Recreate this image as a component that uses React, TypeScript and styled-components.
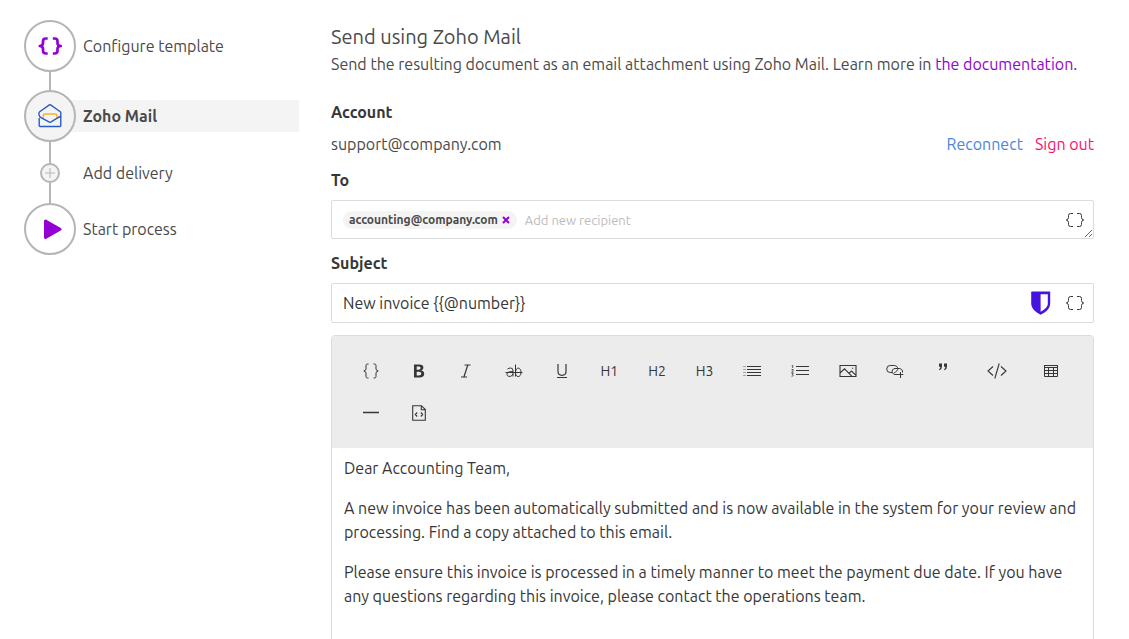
import React from "react";
import styled, { createGlobalStyle, css } from "styled-components";

const GlobalStyle = createGlobalStyle`
  *, *::before, *::after { box-sizing: border-box; }
  body {
    margin: 0;
    background: #fff;
    color: #4a4a4a;
    font-family: Ubuntu, "Noto Sans", sans-serif;
    font-size: 16px;
    line-height: 24px;
  }
  button, input { font: inherit; color: inherit; }
  button { padding: 0; border: 0; background: none; cursor: pointer; }
  h1, h2, p, ol { margin: 0; padding: 0; font-size: inherit; font-weight: inherit; }
  a { text-decoration: none; }
  svg { display: block; }
`;

const Page = styled.div`
  display: flex;
  gap: 32px;
  padding: 20px 35px 24px 24px;
`;

const Sidebar = styled.nav`
  flex: 0 0 275px;
`;

const Steps = styled.ol`
  list-style: none;
`;

const StepItem = styled.li<{ $link?: number }>`
  ${(p) =>
    p.$link &&
    css`
      &::after {
        content: "";
        display: block;
        width: 2px;
        height: ${p.$link}px;
        margin-left: 25px;
        background: #b5b5b5;
      }
    `}
`;

const StepButton = styled.button<{ $active?: boolean }>`
  display: flex;
  align-items: center;
  width: 100%;
  text-align: left;
  font-weight: ${(p) => (p.$active ? 600 : 400)};
  ${(p) =>
    p.$active &&
    css`
      background: linear-gradient(#f4f4f4, #f4f4f4) 26px center / 100% 32px no-repeat;
    `}
`;

const IconSlot = styled.span`
  display: flex;
  justify-content: center;
  flex: 0 0 52px;
  margin-right: 7px;
`;

const Circle = styled.span<{ $small?: boolean; $filled?: boolean }>`
  display: flex;
  align-items: center;
  justify-content: center;
  width: ${(p) => (p.$small ? 20 : 52)}px;
  height: ${(p) => (p.$small ? 20 : 52)}px;
  border: 2px solid #b5b5b5;
  border-radius: 50%;
  background: ${(p) => (p.$filled ? "#f4f4f4" : "#fff")};
`;

const StepLabel = styled.span`
  line-height: 20px;
`;

const Main = styled.main`
  flex: 1;
  min-width: 0;
  padding-top: 2px;
`;

const Title = styled.h1`
  && { font-size: 20px; }
  line-height: 30px;
`;

const DocLink = styled.a`
  color: #9400d3;
`;

const Label = styled.label`
  display: block;
  margin: 12px 0 8px;
  color: #363636;
  font-weight: 600;
`;

const AccountHeading = styled(Label).attrs({ as: "h2" })`
  && {
    margin: 24px 0 8px;
    font-weight: 600;
  }
`;

const AccountRow = styled.div`
  display: flex;
  gap: 12px;
`;

const AccountName = styled.span`
  flex: 1;
`;

const TextAction = styled.button<{ $color: string }>`
  color: ${(p) => p.$color};
`;

const Field = styled.div<{ $height: number }>`
  position: relative;
  display: flex;
  align-items: center;
  height: ${(p) => p.$height}px;
  padding: 0 8px 0 11px;
  border: 1px solid #dbdbdb;
  border-radius: 2px;
  color: #363636;
`;

const Tag = styled.span`
  display: flex;
  align-items: center;
  gap: 4px;
  height: 18px;
  margin-right: 8px;
  padding: 0 7px 0 6px;
  border-radius: 9px;
  background: #f4f4f4;
  color: #4a4a4a;
  font-size: 12px;
  font-weight: 600;
  line-height: 18px;
`;

const FieldInput = styled.input<{ $small?: boolean }>`
  flex: 1;
  min-width: 0;
  height: 24px;
  padding: 0;
  border: 0;
  outline: 0;
  background: none;
  font-size: ${(p) => (p.$small ? 13 : 16)}px;
  &::placeholder { color: #bcbcbc; opacity: 1; }
`;

const FieldActions = styled.div`
  display: flex;
  align-items: center;
  gap: 14px;
`;

const ResizeGrip = styled.svg`
  position: absolute;
  right: 0;
  bottom: 0;
`;

const Editor = styled.section`
  margin-top: 12px;
  border: 1px solid #dbdbdb;
  border-radius: 4px;
  overflow: hidden;
`;

const Toolbar = styled.div`
  display: grid;
  grid-template-columns: repeat(13, 1fr) 60px 48px;
  grid-auto-rows: 42px;
  padding: 14px 18px 14px 15px;
  background: #ececec;
  color: #363636;
`;

const Tool = styled.button`
  display: flex;
  align-items: center;
  justify-content: center;
  font-size: 14px;
`;

const EditorBody = styled.div`
  min-height: 240px;
  padding: 8px 12px;
  color: #363636;
  outline: 0;
  p + p { margin-top: 16px; }
`;

const Stroke = ({ w, h, sw = 1, children }: { w: number; h: number; sw?: number; children: React.ReactNode }) => (
  <svg width={w} height={h} viewBox={`0 0 ${w} ${h}`} fill="none" stroke="currentColor" strokeWidth={sw} aria-hidden="true">
    {children}
  </svg>
);

const TemplateIcon = () => (
  <svg width="24" height="20" viewBox="0 0 24 20" fill="none" stroke="#9400d3" strokeWidth="2.700" strokeLinejoin="round" aria-hidden="true">
    <path d="M9.700 2.500H7.800Q5 2.500 5 5.200V7.200Q5 9.500 1.800 10Q5 10.500 5 12.800V14.800Q5 17.500 7.800 17.500H9.700M14.800 2.500H16.700Q19.500 2.500 19.500 5.200V7.200Q19.500 9.500 22.700 10Q19.500 10.500 19.500 12.800V14.800Q19.500 17.500 16.700 17.500H14.800" />
  </svg>
);

const ZohoIcon = () => (
  <svg width="24" height="24" viewBox="0 0 24 24" fill="none" strokeWidth="1.400" strokeLinejoin="round" strokeLinecap="round" aria-hidden="true">
    <path stroke="#f9b21d" d="M5.200 14V12Q5.200 10 7 10H17.200Q19 10 19 12V14" />
    <path stroke="#2a5bc4" d="M1.200 14.500V21.500Q1.200 22.500 2.200 22.500H21.800Q22.800 22.500 22.800 21.500V8.700Q22.800 8.100 22.300 7.700L12.600 0.900Q12 0.600 11.400 0.900L1.700 7.700Q0.600 8.700 1 10.500Q1.200 12.700 3 13.700L11.400 18.200Q12 18.500 12.600 18.200L22.600 12.100" />
  </svg>
);

const PlayIcon = () => (
  <svg width="24" height="24" viewBox="0 0 24 24" fill="#9400d3" stroke="#9400d3" strokeWidth="3" strokeLinejoin="round" aria-hidden="true">
    <path d="M7.500 4L22 12.200L7.500 20.500Z" />
  </svg>
);

const BracesIcon = () => (
  <Stroke w={20} h={16}>
    <path d="M8 1.500H5.500Q3.500 1.500 3.500 3.500V5.500Q3.500 7.500 1.300 8Q3.500 8.500 3.500 10.500V12.500Q3.500 14.500 5.500 14.500H8M12 1.500H14.500Q16.500 1.500 16.500 3.500V5.500Q16.500 7.500 18.700 8Q16.500 8.500 16.500 10.500V12.500Q16.500 14.500 14.500 14.500H12" />
  </Stroke>
);

const ShieldIcon = () => (
  <svg width="20" height="24" viewBox="0 0 20 24" aria-hidden="true">
    <path fill="#4614e0" d="M1 0.500H18.500Q19.200 0.500 19.200 1.200V12.500C19.200 17.500 14.500 21.500 9.600 23.700C5 21.500 0.200 17.500 0.200 12.500V1.200Q0.200 0.500 1 0.500Z" />
    <path fill="#fff" d="M9.600 3.200H16.800V12.800C16.800 16 13 19 9.600 20.800Z" />
  </svg>
);

const tools: { name: string; icon: React.ReactNode }[] = [
  {
    name: "Insert placeholder",
    icon: (
      <Stroke w={18} h={16}>
        <path d="M6.500 1H5.500Q4 1 4 2.500V6Q4 7.500 1.800 8Q4 8.500 4 10V13.500Q4 15 5.500 15H6.500M11.500 1H12.500Q14 1 14 2.500V6Q14 7.500 16.200 8Q14 8.500 14 10V13.500Q14 15 12.500 15H11.500" />
      </Stroke>
    ),
  },
  {
    name: "Bold",
    icon: (
      <svg width="12" height="14" viewBox="0 0 12 14" fill="currentColor" fillRule="evenodd" aria-hidden="true">
        <path d="M1 0.500H6.300Q10.400 0.500 10.400 3.700Q10.400 5.900 8.200 6.600Q11.200 7.100 11.200 9.700Q11.200 13.500 6.500 13.500H1ZM3.700 2.500V5.800H5.500Q7.600 5.800 7.600 4T5.700 2.500ZM3.700 7.800V11.500H5.800Q8.300 11.500 8.300 9.600T5.800 7.800Z" />
      </svg>
    ),
  },
  {
    name: "Italic",
    icon: (
      <Stroke w={12} h={14} sw={1.2}>
        <path d="M4.500 1H10.500M1 13H7M7.800 1L3.900 13" />
      </Stroke>
    ),
  },
  {
    name: "Strikethrough",
    icon: (
      <Stroke w={18} h={14}>
        <path d="M0.500 8.500H17.500M2.500 5Q4 4 5.500 4Q8 4 8 6.700V12.500M8 7.500C5 7.500 2 8 2 10.300C2 13.300 7 13.200 8 10M10.500 0.500V12.500M10.500 8.500C10.500 2.700 16 2.700 16 8.300S10.500 14 10.500 8.500" />
      </Stroke>
    ),
  },
  {
    name: "Underline",
    icon: (
      <Stroke w={12} h={16} sw={1.2}>
        <path d="M2 1V8.500Q2 12.300 6 12.300T10 8.500V1M1 14.500H11" />
      </Stroke>
    ),
  },
  { name: "Heading 1", icon: "H1" },
  { name: "Heading 2", icon: "H2" },
  { name: "Heading 3", icon: "H3" },
  {
    name: "Bulleted list",
    icon: (
      <Stroke w={18} h={12}>
        <path d="M4 1.500H18M4 4.500H18M4 7.500H18M4 10.500H18" />
        <path strokeDasharray="1 1" d="M0.500 1.500H3M0.500 4.500H3M0.500 7.500H3M0.500 10.500H3" opacity=".8" />
      </Stroke>
    ),
  },
  {
    name: "Numbered list",
    icon: (
      <Stroke w={18} h={12}>
        <path d="M5 1.500H18M5 5.500H18M5 9.500H18" />
        <path strokeWidth=".8" d="M0.700 0.800L1.700 0.300V3M0.500 4.500H2.200V5.500L0.600 7H2.500M0.500 8.400H2.200L1.300 9.600Q2.400 9.800 2.200 10.600T0.500 11.200" />
      </Stroke>
    ),
  },
  {
    name: "Image",
    icon: (
      <Stroke w={18} h={14} sw={1.1}>
        <path d="M1 1.500H17V12.500H1ZM1 9L5.500 4.800L13 12.300M10 9.300L12.500 7L17 11.300M13 4.300H14.200" />
      </Stroke>
    ),
  },
  {
    name: "Link",
    icon: (
      <Stroke w={18} h={14}>
        <path d="M6 8.500H4.200A3.200 3.200 0 0 1 4.200 1.500H8.500A3.200 3.200 0 0 1 10.500 7.200Q9.700 8.500 8.300 8.500M12.500 10.500H9A3 3 0 0 1 6.500 6Q7.300 4.500 9 4.500H13.200A3.300 3.300 0 0 1 16.500 8.500M14.500 8V14M11.800 10.500H17.300" />
      </Stroke>
    ),
  },
  {
    name: "Quote",
    icon: (
      <svg width="10" height="16" viewBox="0 0 10 16" fill="currentColor" aria-hidden="true">
        <path d="M1 0.500H4V3.500Q4 6.300 1.500 7.300L1 6.500Q2.300 5.600 2.400 3.800H1ZM6 0.500H9V3.500Q9 6.300 6.500 7.300L6 6.500Q7.300 5.600 7.400 3.800H6Z" />
      </svg>
    ),
  },
  {
    name: "Code",
    icon: (
      <Stroke w={20} h={16} sw={1.1}>
        <path d="M6 3.500L1 8L6 12.500M14 3.500L19 8L14 12.500M12.200 0.500L7.800 15.500" />
      </Stroke>
    ),
  },
  {
    name: "Table",
    icon: (
      <Stroke w={14} h={14}>
        <path d="M0.500 1V12.500H13.500V1M0.500 6.500H13.500M0.500 9.500H13.500M4.500 3V12.500M9.500 3V12.500M0.500 1.500H13.500M0.500 3.500H13.500" />
      </Stroke>
    ),
  },
  {
    name: "Horizontal line",
    icon: (
      <Stroke w={16} h={4}>
        <path d="M0 1.500H16" strokeWidth="1.400" />
      </Stroke>
    ),
  },
  {
    name: "HTML source",
    icon: (
      <Stroke w={14} h={16} sw={1.1}>
        <path d="M0.700 0.700H9.500L13.300 4.500V15.300H0.700ZM9.300 0.700V4.700H13.300M5.200 7.500L3.300 9.500L5.200 11.500M8.800 7.500L10.700 9.500L8.800 11.500" />
      </Stroke>
    ),
  },
];

export default function App() {
  return (
    <>
      <GlobalStyle />
      <Page>
        <Sidebar aria-label="Workflow steps">
          <Steps>
            <StepItem $link={18}>
              <StepButton>
                <IconSlot><Circle><TemplateIcon /></Circle></IconSlot>
                <StepLabel>Configure template</StepLabel>
              </StepButton>
            </StepItem>
            <StepItem $link={21}>
              <StepButton $active aria-current="step">
                <IconSlot><Circle $filled><ZohoIcon /></Circle></IconSlot>
                <StepLabel>Zoho Mail</StepLabel>
              </StepButton>
            </StepItem>
            <StepItem $link={20}>
              <StepButton>
                <IconSlot>
                  <Circle $small $filled>
                    <svg width="10" height="10" viewBox="0 0 10 10" stroke="#b5b5b5" aria-hidden="true">
                      <path d="M5 0V10M0 5H10" />
                    </svg>
                  </Circle>
                </IconSlot>
                <StepLabel>Add delivery</StepLabel>
              </StepButton>
            </StepItem>
            <StepItem>
              <StepButton>
                <IconSlot><Circle><PlayIcon /></Circle></IconSlot>
                <StepLabel>Start process</StepLabel>
              </StepButton>
            </StepItem>
          </Steps>
        </Sidebar>
        <Main>
          <Title>Send using Zoho Mail</Title>
          <p>
            Send the resulting document as an email attachment using Zoho Mail. Learn more in{" "}
            <DocLink href="#documentation">the documentation.</DocLink>
          </p>

          <AccountHeading>Account</AccountHeading>
          <AccountRow>
            <AccountName>support@company.com</AccountName>
            <TextAction $color="#4a86dc">Reconnect</TextAction>
            <TextAction $color="#ff0f6b">Sign out</TextAction>
          </AccountRow>

          <Label htmlFor="recipient">To</Label>
          <Field $height={39}>
            <Tag>
              accounting@company.com
              <button aria-label="Remove recipient">
                <svg width="8" height="8" viewBox="0 0 8 8" stroke="#9400d3" strokeWidth="2" aria-hidden="true">
                  <path d="M1 1L7 7M7 1L1 7" />
                </svg>
              </button>
            </Tag>
            <FieldInput id="recipient" $small placeholder="Add new recipient" />
            <FieldActions>
              <button aria-label="Insert placeholder in recipients"><BracesIcon /></button>
            </FieldActions>
            <ResizeGrip width="9" height="9" viewBox="0 0 9 9" stroke="#666" aria-hidden="true">
              <path d="M1 8L8 1M5 8L8 5" />
            </ResizeGrip>
          </Field>

          <Label htmlFor="subject">Subject</Label>
          <Field $height={40}>
            <FieldInput id="subject" defaultValue="New invoice {{@number}}" />
            <FieldActions>
              <ShieldIcon />
              <button aria-label="Insert placeholder in subject"><BracesIcon /></button>
            </FieldActions>
          </Field>

          <Editor>
            <Toolbar role="toolbar" aria-label="Formatting">
              {tools.map((t) => (
                <Tool key={t.name} aria-label={t.name}>{t.icon}</Tool>
              ))}
            </Toolbar>
            <EditorBody role="textbox" aria-multiline="true" aria-label="Message" contentEditable suppressContentEditableWarning spellCheck={false}>
              <p>Dear Accounting Team,</p>
              <p>
                A new invoice has been automatically submitted and is now available in the system for your review and
                processing. Find a copy attached to this email.
              </p>
              <p>
                Please ensure this invoice is processed in a timely manner to meet the payment due date. If you have
                any questions regarding this invoice, please contact the operations team.
              </p>
            </EditorBody>
          </Editor>
        </Main>
      </Page>
    </>
  );
}
